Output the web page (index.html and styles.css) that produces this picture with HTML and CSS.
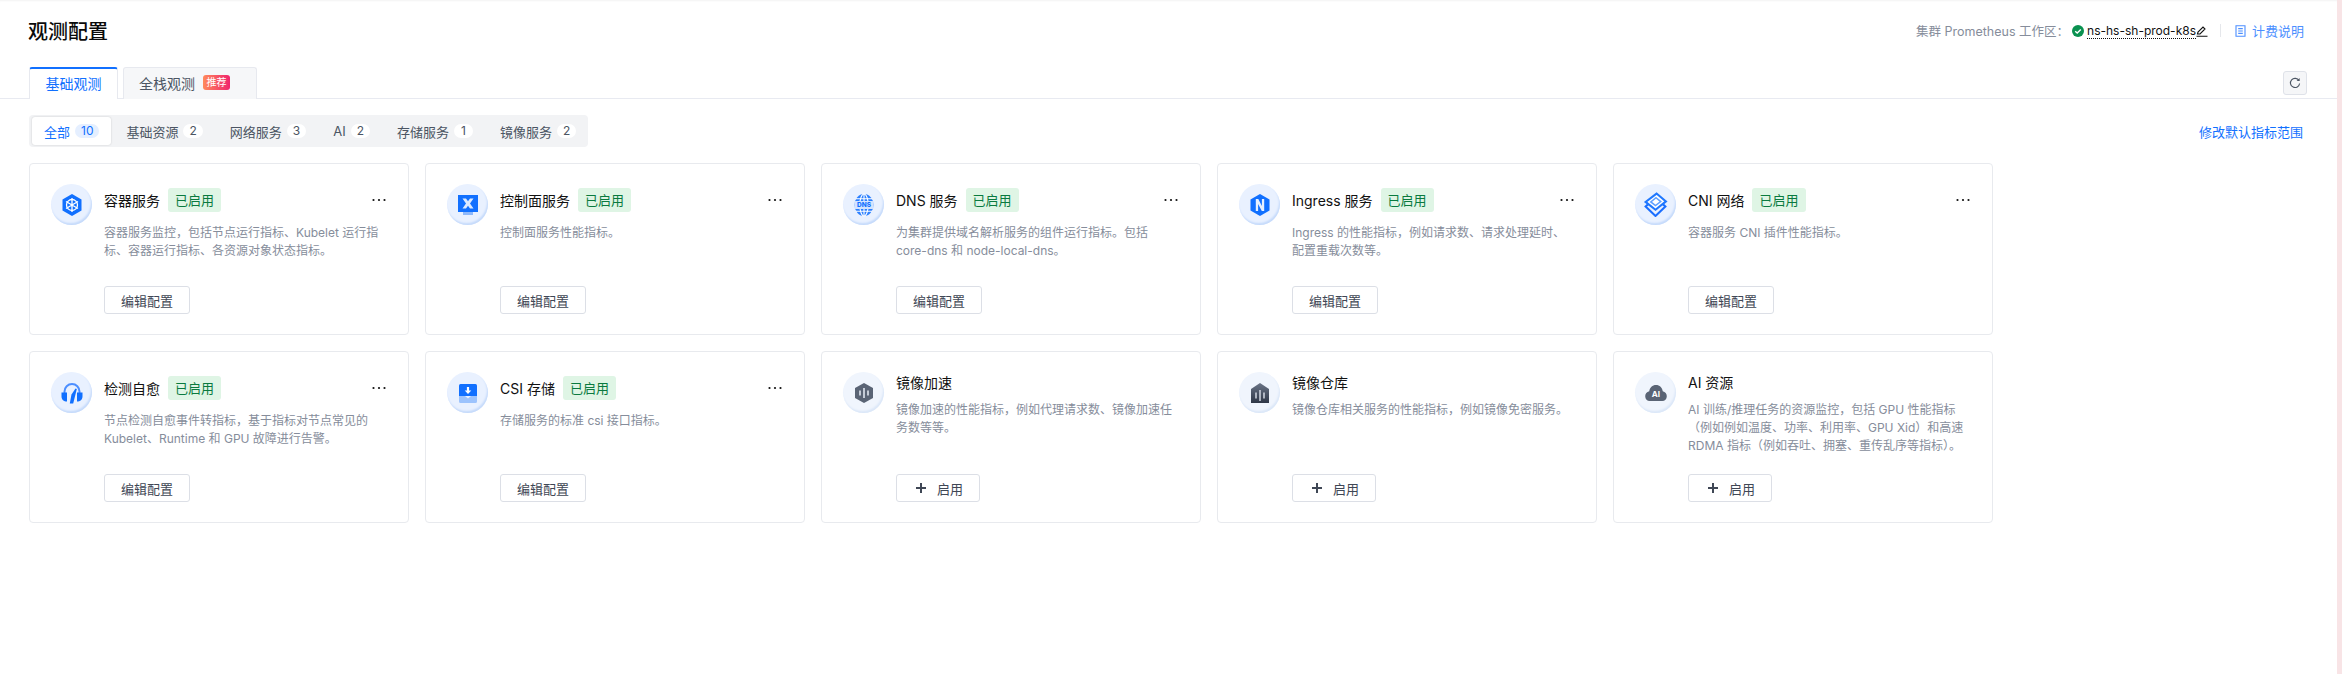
FILE: index.html
```html
<!DOCTYPE html>
<html lang="zh-CN">
<head>
<meta charset="utf-8">
<title>观测配置</title>
<link rel="stylesheet" href="styles.css">
</head>
<body>
<div class="page">
  <header class="header">
    <h1 class="title">观测配置</h1>
    <div class="meta">
      <span class="meta-label">集群 Prometheus 工作区：</span>
      <svg class="check" viewBox="0 0 12 12"><circle cx="6" cy="6" r="6" fill="#0a9150"/><path d="M3.2 6.2 5.2 8 8.8 4.4" fill="none" stroke="#fff" stroke-width="1.4"/></svg>
      <span class="workspace">ns-hs-sh-prod-k8s</span>
      <svg class="pencil" viewBox="0 0 12 12"><path d="M1.5 9 2 7l5-5 2 2-5 5z M0.5 11.2h11" fill="none" stroke="#111" stroke-width="1.1"/></svg>
      <span class="divider"></span>
      <svg class="doc" viewBox="0 0 11 12"><path d="M1 .7h9v10.6H1zM3.2 3.6h4.6M3.2 6h4.6M3.2 8.4h4.6" fill="none" stroke="#4d8fff" stroke-width="1.1"/></svg>
      <a class="billing">计费说明</a>
    </div>
  </header>

  <div class="tabs">
    <div class="tab tab-active">基础观测</div>
    <div class="tab tab-idle">全栈观测<span class="hot">推荐</span></div>
    <button class="refresh"><svg viewBox="0 0 12 12"><path d="M10 3.6A4.6 4.6 0 1 0 10.6 6.5" fill="none" stroke="#4b5563" stroke-width="1.1"/><path d="M10.6 1v3H7.6z" fill="#4b5563"/></svg></button>
  </div>

  <div class="toolbar">
    <div class="segments">
      <div class="seg seg-active">全部<span class="count">10</span></div>
      <div class="seg">基础资源<span class="count">2</span></div>
      <div class="seg">网络服务<span class="count">3</span></div>
      <div class="seg">AI<span class="count">2</span></div>
      <div class="seg">存储服务<span class="count">1</span></div>
      <div class="seg">镜像服务<span class="count">2</span></div>
    </div>
    <a class="scope">修改默认指标范围</a>
  </div>

  <main class="grid">
    <article class="card">
      <div class="avatar"><svg viewBox="0 0 22 24"><path d="M11 1 20.500 6.500V17.500L11 23 1.500 17.500V6.500z" fill="#1170ff"/><g fill="none" stroke="#fff" stroke-width="1.300"><circle cx="11" cy="12" r="5.500"/><path d="M11 5v14M5 8.500l12 7M17 8.500l-12 7"/></g></svg></div>
      <div class="body">
        <div class="head"><span class="name">容器服务</span><span class="on">已启用</span><svg class="more" viewBox="0 0 16 4"><circle cx="2.500" cy="2" r="1.100"/><circle cx="8" cy="2" r="1.100"/><circle cx="13.500" cy="2" r="1.100"/></svg></div>
        <p class="desc">容器服务监控，包括节点运行指标、Kubelet 运行指标、容器运行指标、各资源对象状态指标。</p>
        <button class="btn">编辑配置</button>
      </div>
    </article>
    <article class="card">
      <div class="avatar"><svg viewBox="0 0 22 24"><path d="M1 2h20v17H1z" fill="#1170ff"/><path d="M6 19h10v3H6z" fill="#8db8fb"/><path d="M5.500 5.500h3.500l2 2.700 2-2.700h3.500l-3.500 5 3.500 5H13l-2-2.700-2 2.700H5.500l3.500-5z" fill="#dbe9ff"/></svg></div>
      <div class="body">
        <div class="head"><span class="name">控制面服务</span><span class="on">已启用</span><svg class="more" viewBox="0 0 16 4"><circle cx="2.500" cy="2" r="1.100"/><circle cx="8" cy="2" r="1.100"/><circle cx="13.500" cy="2" r="1.100"/></svg></div>
        <p class="desc">控制面服务性能指标。</p>
        <button class="btn">编辑配置</button>
      </div>
    </article>
    <article class="card">
      <div class="avatar"><svg viewBox="0 0 22 24"><ellipse cx="11" cy="12" rx="9.500" ry="11" fill="#2b7fff"/><g fill="none" stroke="#fff" stroke-width="1.100"><ellipse cx="11" cy="12" rx="4.200" ry="11"/><path d="M11 1v22M3 5.800h16M3 18.200h16"/></g><rect x="1.500" y="8" width="19" height="8" rx="1" fill="#d3e4ff"/><text x="11" y="14.300" class="dns">DNS</text></svg></div>
      <div class="body">
        <div class="head"><span class="name">DNS 服务</span><span class="on">已启用</span><svg class="more" viewBox="0 0 16 4"><circle cx="2.500" cy="2" r="1.100"/><circle cx="8" cy="2" r="1.100"/><circle cx="13.500" cy="2" r="1.100"/></svg></div>
        <p class="desc">为集群提供域名解析服务的组件运行指标。包括 core-dns 和 node-local-dns。</p>
        <button class="btn">编辑配置</button>
      </div>
    </article>
    <article class="card">
      <div class="avatar"><svg viewBox="0 0 22 24"><path d="M11 1 20.500 6.500V17.500L11 23 1.500 17.500V6.500z" fill="#1170ff"/><path d="M6.800 18V6h2.500l3.600 7V6h2.300v12h-2.400L9.100 11v7z" fill="#e6f0ff"/></svg></div>
      <div class="body">
        <div class="head"><span class="name">Ingress 服务</span><span class="on">已启用</span><svg class="more" viewBox="0 0 16 4"><circle cx="2.500" cy="2" r="1.100"/><circle cx="8" cy="2" r="1.100"/><circle cx="13.500" cy="2" r="1.100"/></svg></div>
        <p class="desc">Ingress 的性能指标，例如请求数、请求处理延时、配置重载次数等。</p>
        <button class="btn">编辑配置</button>
      </div>
    </article>
    <article class="card">
      <div class="avatar"><svg class="wide" viewBox="0 0 24 24"><path d="M2.500 14 12 23l9.500-9-4-3.800L12 15.500 6.500 10.200z" fill="none" stroke="#1a6eff" stroke-width="2"/><path d="M13 1.500 22 9 12 17 2.500 9.500z" fill="#fff" stroke="#1f78ff" stroke-width="2"/><path d="M12.500 5.500 17 9.200 12 13 7.500 9.500z" fill="none" stroke="#5fa0ff" stroke-width="1.500"/></svg></div>
      <div class="body">
        <div class="head"><span class="name">CNI 网络</span><span class="on">已启用</span><svg class="more" viewBox="0 0 16 4"><circle cx="2.500" cy="2" r="1.100"/><circle cx="8" cy="2" r="1.100"/><circle cx="13.500" cy="2" r="1.100"/></svg></div>
        <p class="desc">容器服务 CNI 插件性能指标。</p>
        <button class="btn">编辑配置</button>
      </div>
    </article>

    <article class="card">
      <div class="avatar"><svg viewBox="0 0 22 24"><path d="M3.500 12V10.500a7.500 7.500 0 0 1 15 0V12" fill="none" stroke="#4d8fff" stroke-width="2"/><path d="M.5 11.500h5.500v9C2.800 20.500.5 18.500.5 15.500zM21.500 11.500H16v9c3.200 0 5.500-2 5.500-5z" fill="#1170ff"/><path d="M14.500 7.500 10.500 13.500 8.800 22.500h3.400L15.800 8z" fill="#1170ff"/></svg></div>
      <div class="body">
        <div class="head"><span class="name">检测自愈</span><span class="on">已启用</span><svg class="more" viewBox="0 0 16 4"><circle cx="2.500" cy="2" r="1.100"/><circle cx="8" cy="2" r="1.100"/><circle cx="13.500" cy="2" r="1.100"/></svg></div>
        <p class="desc">节点检测自愈事件转指标，基于指标对节点常见的 Kubelet、Runtime 和 GPU 故障进行告警。</p>
        <button class="btn">编辑配置</button>
      </div>
    </article>
    <article class="card">
      <div class="avatar"><svg viewBox="0 0 22 24"><path d="M3.500 3h15A1.500 1.500 0 0 1 20 4.500V15H2V4.500A1.500 1.500 0 0 1 3.500 3z" fill="#1170ff"/><path d="M2 15h6l3 2.500 3-2.500h6v5.500a1.500 1.500 0 0 1-1.500 1.500h-15A1.500 1.500 0 0 1 2 20.500z" fill="#9cc3fd"/><path d="M9.900 6h2.200v3.500h2.200L11 13 7.700 9.500h2.200z" fill="#fff"/></svg></div>
      <div class="body">
        <div class="head"><span class="name">CSI 存储</span><span class="on">已启用</span><svg class="more" viewBox="0 0 16 4"><circle cx="2.500" cy="2" r="1.100"/><circle cx="8" cy="2" r="1.100"/><circle cx="13.500" cy="2" r="1.100"/></svg></div>
        <p class="desc">存储服务的标准 csi 接口指标。</p>
        <button class="btn">编辑配置</button>
      </div>
    </article>
    <article class="card">
      <div class="avatar avatar-off"><svg viewBox="0 0 22 24"><path d="M11 2 20 7v10l-9 5-9-5V7z" fill="#5a6475"/><path d="M7 9.500v5M11 7v10M15 9.500v5" stroke="#e8edf6" stroke-width="1.500"/></svg></div>
      <div class="body">
        <div class="head head-plain"><span class="name">镜像加速</span></div>
        <p class="desc">镜像加速的性能指标，例如代理请求数、镜像加速任务数等等。</p>
        <button class="btn btn-add"><svg class="plus" viewBox="0 0 10 10"><path d="M5 0v10M0 5h10" stroke="#3f4755" stroke-width="2"/></svg>启用</button>
      </div>
    </article>
    <article class="card">
      <div class="avatar avatar-off"><svg viewBox="0 0 22 24"><defs><linearGradient id="repo" x1="0" y1="0" x2="0" y2="1"><stop offset="0" stop-color="#6a7486"/><stop offset="1" stop-color="#2f3747"/></linearGradient></defs><path d="M11 2 20 8v14H2V8z" fill="url(#repo)"/><path d="M7 11.500v6M11 9v11M15 11.500v6" stroke="#e8edf6" stroke-width="1.300"/></svg></div>
      <div class="body">
        <div class="head head-plain"><span class="name">镜像仓库</span></div>
        <p class="desc">镜像仓库相关服务的性能指标，例如镜像免密服务。</p>
        <button class="btn btn-add"><svg class="plus" viewBox="0 0 10 10"><path d="M5 0v10M0 5h10" stroke="#3f4755" stroke-width="2"/></svg>启用</button>
      </div>
    </article>
    <article class="card">
      <div class="avatar avatar-off"><svg class="cloud" viewBox="0 0 26 20"><path d="M13 1c4 0 7 3 7.500 7 2.800.6 4.500 2.900 4.500 5.600C25 16.800 22.800 19 20 19H6c-2.800 0-5-2.200-5-5.400C1 10.900 2.700 8.600 5.500 8 6 4 9 1 13 1z" fill="#5a6475"/><text x="13" y="14.500" class="ai">AI</text></svg></div>
      <div class="body">
        <div class="head head-plain"><span class="name">AI 资源</span></div>
        <p class="desc">AI 训练/推理任务的资源监控，包括 GPU 性能指标（例如例如温度、功率、利用率、GPU Xid）和高速 RDMA 指标（例如吞吐、拥塞、重传乱序等指标）。</p>
        <button class="btn btn-add"><svg class="plus" viewBox="0 0 10 10"><path d="M5 0v10M0 5h10" stroke="#3f4755" stroke-width="2"/></svg>启用</button>
      </div>
    </article>
  </main>
</div>
<div class="strip"></div>
</body>
</html>
```
FILE: styles.css
```css
* { box-sizing: border-box; }
html, body { margin: 0; height: 100%; }
body {
  display: flex;
  height: 674px;
  overflow: hidden;
  background: #fff;
  color: #111;
  font-family: Inter, "Noto Sans CJK SC", sans-serif;
  font-size: 13px;
}
.page {
  flex: 1;
  min-width: 0;
  box-shadow: inset 0 2px 2px -1px rgba(0, 0, 0, .05);
}
.strip { width: 5px; background: #f8e4e6; }

.header {
  height: 67px;
  padding: 0 33px 6px 28px;
  display: flex;
  align-items: center;
  justify-content: space-between;
}
.title { margin: 0; font-size: 20px; font-weight: 500; color: #0a0a0a; }
.meta { display: flex; align-items: center; font-size: 13px; }
.meta-label { color: #868d9b; font-size: 12.500px; }
.check { width: 12px; height: 12px; margin-left: 3px; }
.workspace {
  margin-left: 3px;
  color: #111;
  font-size: 12px;
  line-height: 15px;
  border-bottom: 1px dotted #111;
}
.pencil { width: 12px; height: 12px; }
.divider { width: 1px; height: 13px; margin: 0 14px 0 12px; background: #e5e7eb; }
.doc { width: 11px; height: 12px; margin-right: 6px; }
.billing { color: #4d8fff; }

.tabs {
  height: 32px;
  padding: 0 30px 0 29px;
  display: flex;
  align-items: flex-end;
  gap: 5px;
  border-bottom: 1px solid #e8eaf1;
}
.tab {
  height: 32px;
  margin-bottom: -1px;
  padding-bottom: 2px;
  display: flex;
  align-items: center;
  font-size: 14px;
  border: 1px solid #e7e9ef;
  border-bottom: 0;
  border-radius: 3px 3px 0 0;
}
.tab-active {
  width: 89px;
  justify-content: center;
  color: #1170ff;
  background: #fff;
  border-top: 2px solid #1170ff;
}
.tab-idle {
  width: 134px;
  padding-left: 15px;
  color: #4b5563;
  background: #f6f7f9;
}
.hot {
  width: 27px;
  height: 15px;
  margin-left: 8px;
  border-radius: 3px;
  background: linear-gradient(90deg, #ff8a5c, #f0246e);
  color: #fff;
  font-size: 10px;
  line-height: 15px;
  text-align: center;
}
.refresh {
  width: 24px;
  height: 24px;
  margin: 0 0 3px auto;
  padding: 0;
  display: flex;
  align-items: center;
  justify-content: center;
  background: #f5f6f8;
  border: 1px solid #dfe2e9;
  border-radius: 3px;
}
.refresh svg { width: 12px; height: 12px; }

.toolbar {
  height: 64px;
  padding: 16px 34px 16px 29px;
  display: flex;
  align-items: center;
  justify-content: space-between;
}
.segments {
  height: 32px;
  padding: 2px 0 2px 3px;
  display: flex;
  gap: 3px;
  background: #f2f3f5;
  border-radius: 4px;
}
.seg {
  padding: 0 12px;
  display: flex;
  align-items: center;
  color: #4b5563;
  border-radius: 3px;
}
.seg-active { background: #fff; color: #1170ff; box-shadow: 0 0 2px rgba(0, 0, 0, .18); }
.count {
  min-width: 19px;
  height: 14px;
  margin-left: 5px;
  padding: 0 6px;
  border-radius: 7px;
  background: #fff;
  color: #4b5563;
  font-size: 12px;
  line-height: 14px;
  text-align: center;
}
.seg-active .count { background: #e5efff; color: #1170ff; }
.scope { color: #1170ff; }

.grid {
  padding-left: 29px;
  display: grid;
  grid-template-columns: repeat(5, 380px);
  grid-auto-rows: 172px;
  gap: 16px;
}
.card {
  padding: 20px 21px 20px 21px;
  display: flex;
  gap: 12px;
  border: 1px solid #e8eaee;
  border-radius: 4px;
  background: #fff;
}
.avatar {
  flex: none;
  width: 41px;
  height: 41px;
  display: flex;
  align-items: center;
  justify-content: center;
  border-radius: 50%;
  background: #e9f1ff;
  box-shadow: inset -1px -2px 2px #c5dafb;
}
.avatar svg { width: 22px; height: 24px; }
.avatar .wide { width: 25px; height: 25px; }
.avatar .cloud { width: 24px; height: 18px; }
.avatar-off { background: #f0f5fd; box-shadow: inset -1px -2px 2px #dbe7f8; }
.dns { font: 800 6.5px Inter, sans-serif; fill: #1170ff; text-anchor: middle; }
.ai { font: 700 9px Inter, sans-serif; fill: #fff; text-anchor: middle; }

.body { flex: 1; min-width: 0; display: flex; flex-direction: column; align-items: flex-start; }
.head { width: 100%; height: 24px; margin-top: 4px; display: flex; align-items: center; }
.head-plain { height: 24px; margin-top: -2px; }
.name { font-size: 14px; color: #111; }
.on {
  height: 24px;
  margin-left: 8px;
  padding: 0 7px;
  border-radius: 3px;
  background: #dff5e5;
  color: #0a7a3f;
  font-size: 13px;
  line-height: 24px;
}
.more { width: 16px; height: 4px; margin-left: auto; fill: #111; }
.desc {
  margin: 12px 0 0;
  font-size: 12px;
  line-height: 18px;
  color: #868d9b;
}
.head-plain + .desc { margin-top: 7px; }
.btn {
  height: 28px;
  margin-top: auto;
  padding: 0 16px;
  display: flex;
  align-items: center;
  background: #fff;
  border: 1px solid #dcdfe6;
  border-radius: 3px;
  color: #3f4755;
  font: inherit;
  font-size: 13px;
}
.plus { width: 10px; height: 10px; margin: 0 11px 0 3px; }
```
